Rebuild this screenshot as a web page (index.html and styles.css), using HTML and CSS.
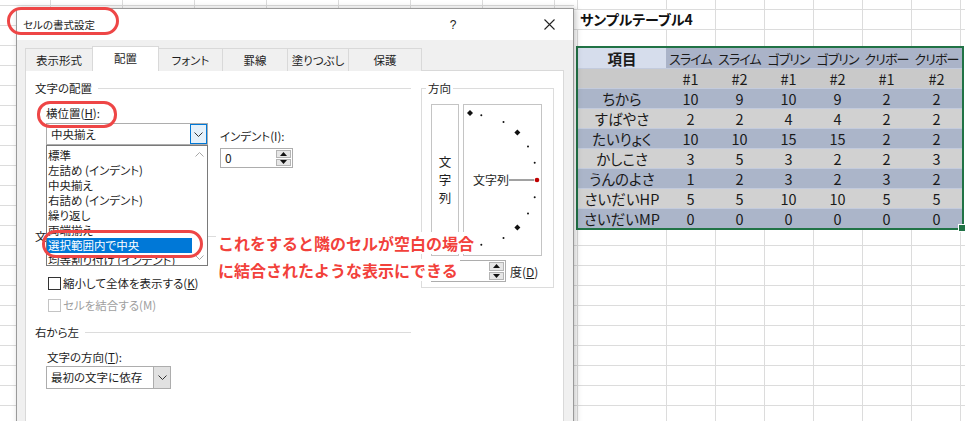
FILE: index.html
```html
<!DOCTYPE html>
<html lang="ja">
<head>
<meta charset="utf-8">
<title>セルの書式設定</title>
<link rel="stylesheet" href="styles.css">
</head>
<body>
<div class="app">
  <div class="gutter"></div>
  <div class="dialog-col">
    <div class="dialog">
      <div class="titlebar">
        <span class="title">セルの書式設定</span>
        <span class="help">?</span>
        <span class="close"><svg width="11" height="11" viewBox="0 0 11 11"><path d="M0.5 0.5L10.5 10.5M10.5 0.5L0.5 10.5" stroke="#222" stroke-width="1.1" fill="none"/></svg></span>
      </div>
      <div class="dbody">
        <div class="tabs">
          <div class="tab w1">表示形式</div>
          <div class="tab w2 sel">配置</div>
          <div class="tab w3">フォント</div>
          <div class="tab w4">罫線</div>
          <div class="tab w5">塗りつぶし</div>
          <div class="tab w6">保護</div>
        </div>
        <div class="panel">
          <div class="leftcol">
            <div class="ghead">文字の配置</div>
            <div class="row-top">
              <div class="col-h">
                <div class="lbl">横位置(<u>H</u>):</div>
                <div class="combo-wrap">
                  <div class="combo"><span class="val">中央揃え</span><span class="btn active"><svg width="9" height="5" viewBox="0 0 9 5"><path d="M0.5 0.5L4.5 4.5L8.5 0.5" stroke="#333" fill="none"/></svg></span></div>
                  <div class="listbox">
                    <div class="items">
                      <div class="item">標準</div>
                      <div class="item">左詰め (インデント)</div>
                      <div class="item">中央揃え</div>
                      <div class="item">右詰め (インデント)</div>
                      <div class="item">繰り返し</div>
                      <div class="item">両端揃え</div>
                      <div class="item selected">選択範囲内で中央</div>
                      <div class="item">均等割り付け (インデント)</div>
                    </div>
                    <div class="sb">
                      <svg width="9" height="5" viewBox="0 0 9 5"><path d="M0.5 4.5L4.5 0.5L8.5 4.5" stroke="#a8a8a8" fill="none"/></svg>
                      <svg width="9" height="5" viewBox="0 0 9 5"><path d="M0.5 0.5L4.5 4.5L8.5 0.5" stroke="#a8a8a8" fill="none"/></svg>
                    </div>
                  </div>
                </div>
                <div class="v-spacer"></div>
              </div>
              <div class="col-indent">
                <div class="lbl">インデント(I):</div>
                <div class="spin indent">
                  <span class="val">0</span>
                  <span class="arrows">
                    <span class="sbtn"><svg width="7" height="4" viewBox="0 0 7 4"><path d="M3.5 0L7 4H0Z" fill="#111"/></svg></span>
                    <span class="sbtn"><svg width="7" height="4" viewBox="0 0 7 4"><path d="M0 0H7L3.5 4Z" fill="#111"/></svg></span>
                  </span>
                </div>
              </div>
            </div>
            <div class="ghead g2">文字の制御</div>
            <div class="chk c1"><span class="box"></span><span class="peek">(<u>W</u>)</span></div>
            <div class="chk c2"><span class="box"></span>縮小して全体を表示する(<u>K</u>)</div>
            <div class="chk c3 disabled"><span class="box"></span>セルを結合する(M)</div>
            <div class="ghead g3">右から左</div>
            <div class="lbl dir-lbl">文字の方向(<u>T</u>):</div>
            <div class="combo dir-combo"><span class="val">最初の文字に依存</span><span class="btn"><svg width="9" height="5" viewBox="0 0 9 5"><path d="M0.5 0.5L4.5 4.5L8.5 0.5" stroke="#333" fill="none"/></svg></span></div>
          </div>
          <fieldset class="orient-group">
            <legend>方向</legend>
            <div class="orient">
              <div class="vbox"><span>文</span><span>字</span><span>列</span></div>
              <div class="dial">
                <svg class="dial-svg" width="77" height="150" viewBox="0 0 77 150">
                  <g fill="#111">
                    <path d="M6 5L9 8L6 11L3 8Z"/>
                    <path d="M53.4 24.6L56.4 27.6L53.4 30.6L50.4 27.6Z"/>
                    <path d="M53.4 119.4L56.4 122.4L53.4 125.4L50.4 122.4Z"/>
                    <path d="M6 139L9 142L6 145L3 142Z"/>
                    <circle cx="17.3" cy="10.3" r="1"/>
                    <circle cx="39.5" cy="17" r="1"/>
                    <circle cx="64" cy="41.5" r="1"/>
                    <circle cx="70.7" cy="57.7" r="1"/>
                    <circle cx="70.7" cy="92.3" r="1"/>
                    <circle cx="64" cy="108.5" r="1"/>
                    <circle cx="39.5" cy="133" r="1"/>
                    <circle cx="17.3" cy="139.7" r="1"/>
                  </g>
                  <line x1="45" y1="75" x2="70" y2="75" stroke="#444" stroke-width="1"/>
                  <circle cx="73" cy="75" r="2.3" fill="#c00000"/>
                </svg>
                <span class="dial-label">文字列</span>
              </div>
            </div>
            <div class="deg">
              <div class="spin degspin">
                <span class="val"></span>
                <span class="arrows">
                  <span class="sbtn"><svg width="7" height="4" viewBox="0 0 7 4"><path d="M3.5 0L7 4H0Z" fill="#111"/></svg></span>
                  <span class="sbtn"><svg width="7" height="4" viewBox="0 0 7 4"><path d="M0 0H7L3.5 4Z" fill="#111"/></svg></span>
                </span>
              </div>
              <span class="deg-lbl">度(<u>D</u>)</span>
            </div>
          </fieldset>
        </div>
      </div>
    </div>
  </div>
  <div class="sheet">
    <div class="sheet-top"><div class="sheet-title">サンプルテーブル4</div></div>
    <div class="tbl-wrap">
      <table class="tbl">
        <colgroup><col class="c-name"><col class="c-n"><col class="c-n"><col class="c-n"><col class="c-n"><col class="c-n"><col class="c-last"></colgroup>
        <tr class="hrow"><td class="h0">項目</td><td>スライム</td><td>スライム</td><td>ゴブリン</td><td>ゴブリン</td><td>クリボー</td><td>クリボー</td></tr>
        <tr class="srow"><td></td><td>#1</td><td>#2</td><td>#1</td><td>#2</td><td>#1</td><td>#2</td></tr>
        <tr class="b"><td>ちから</td><td>10</td><td>9</td><td>10</td><td>9</td><td>2</td><td>2</td></tr>
        <tr class="g"><td>すばやさ</td><td>2</td><td>2</td><td>4</td><td>4</td><td>2</td><td>2</td></tr>
        <tr class="b"><td>たいりょく</td><td>10</td><td>10</td><td>15</td><td>15</td><td>2</td><td>2</td></tr>
        <tr class="g"><td>かしこさ</td><td>3</td><td>5</td><td>3</td><td>2</td><td>2</td><td>3</td></tr>
        <tr class="b"><td>うんのよさ</td><td>1</td><td>2</td><td>3</td><td>2</td><td>3</td><td>2</td></tr>
        <tr class="g"><td>さいだいHP</td><td>5</td><td>5</td><td>10</td><td>10</td><td>5</td><td>5</td></tr>
        <tr class="b"><td>さいだいMP</td><td>0</td><td>0</td><td>0</td><td>0</td><td>0</td><td>0</td></tr>
      </table>
    </div>
    <div class="sheet-bottom"></div>
  </div>

  <div class="oval o1"></div>
  <div class="oval o2"></div>
  <div class="oval o3"></div>
  <div class="annot">
    <div class="annot-line">これをすると隣のセルが空白の場合</div>
    <div class="annot-line second">に結合されたような表示にできる</div>
  </div>
</div>
</body>
</html>
```

FILE: styles.css
```css
* { box-sizing: border-box; }
html, body { margin: 0; padding: 0; }
body {
  width: 965px;
  height: 421px;
  overflow: hidden;
  font-family: "Noto Sans CJK JP", "Noto Sans", sans-serif;
  color: #1e1e1e;
  background: #fff;
}
.app {
  --grid: #dcdcdc;
  --vlines: linear-gradient(to right,
    transparent 3px, var(--grid) 3px 4px,
    transparent 4px 92px, var(--grid) 92px 93px,
    transparent 93px 141px, var(--grid) 141px 142px,
    transparent 142px 190px, var(--grid) 190px 191px,
    transparent 191px 239px, var(--grid) 239px 240px,
    transparent 240px 288px, var(--grid) 288px 289px,
    transparent 289px 337px, var(--grid) 337px 338px,
    transparent 338px 386px, var(--grid) 386px 387px,
    transparent 387px);
  position: relative;
  display: flex;
  width: 965px;
  height: 421px;
  overflow: hidden;
  background-color: #fff;
  background-image:
    linear-gradient(to right, var(--grid) 1px, transparent 1px),
    linear-gradient(to bottom, var(--grid) 1px, transparent 1px);
  background-size: 72px 100%, 100% 20px;
  background-position: 50px 0, 0 5px;
}
.gutter { width: 16px; flex: none; }

/* ---------- dialog ---------- */
.dialog-col {
  width: 558px;
  flex: none;
  padding-top: 8px;
  position: relative;
  z-index: 1;
}
.dialog {
  height: 430px;
  border: 1px solid #9a9a9a;
  border-bottom: none;
  background: #f0f0f0;
  box-shadow: 2px 0 6px rgba(0, 0, 0, 0.22);
  font-feature-settings: "palt";
}
.titlebar {
  height: 31px;
  background: #fff;
  display: flex;
  align-items: center;
  padding-left: 6px;
}
.title { flex: 1; font-size: 10.5px; color: #222; }
.help {
  width: 46px;
  text-align: center;
  margin-right: 50px;
  font-size: 12px;
  font-family: "Liberation Sans", sans-serif;
  color: #222;
}
.close {
  width: 46px;
  margin-right: 1px;
  display: flex;
  align-items: center;
  justify-content: center;
}
.dbody { padding: 6px 9px 0 8px; }
.tabs {
  display: flex;
  align-items: flex-end;
  height: 25px;
  padding-left: 1px;
}
.tab {
  height: 23px;
  margin-left: -1px;
  border: 1px solid #d9d9d9;
  border-bottom: none;
  background: #f0f0f0;
  font-size: 11.5px;
  display: flex;
  align-items: center;
  justify-content: center;
  padding-bottom: 1px;
}
.tab.sel {
  height: 25px;
  background: #fff;
  position: relative;
  z-index: 1;
  padding-bottom: 2px;
}
.w1 { width: 68px; }
.w2 { width: 67px; }
.w3 { width: 65px; }
.w4 { width: 66px; }
.w5 { width: 62px; }
.w6 { width: 74px; }

.panel {
  margin-top: -1px;
  height: 380px;
  background: #fff;
  border: 1px solid #d9d9d9;
  display: grid;
  grid-template-columns: 385px 133px;
  column-gap: 10px;
  align-items: start;
  font-size: 11.5px;
}
.ghead {
  display: flex;
  align-items: center;
  height: 16px;
  line-height: 16px;
  margin-top: 9px;
  padding-left: 9px;
  white-space: nowrap;
}
.ghead::after {
  content: "";
  flex: 1;
  height: 1px;
  background: #dcdcdc;
  margin-left: 6px;
}
.lbl { height: 16px; line-height: 16px; white-space: nowrap; }
.row-top { display: flex; margin-top: 9px; }
.col-h { margin-left: 20px; width: 162px; }
.combo-wrap { position: relative; margin-top: 2px; }
.combo {
  display: flex;
  height: 22px;
  border: 1px solid #adadad;
  background: #fff;
}
.combo .val {
  flex: 1;
  padding-left: 4px;
  line-height: 20px;
  white-space: nowrap;
}
.combo .btn {
  width: 17px;
  display: flex;
  align-items: center;
  justify-content: center;
  border-left: 1px solid #adadad;
  background: #e1e1e1;
}
.combo .btn.active {
  background: #e5f1fb;
  box-shadow: inset 0 0 0 1px #0078d7;
  border-left: none;
}
.listbox {
  position: absolute;
  top: 100%;
  left: 0;
  width: 162px;
  height: 121px;
  border: 1px solid #7a7a7a;
  background: #fff;
  display: flex;
  overflow: hidden;
  z-index: 2;
}
.items { flex: 1; padding-top: 2px; overflow: hidden; }
.item {
  height: 15px;
  line-height: 15px;
  padding-left: 1px;
  white-space: nowrap;
}
.item.selected { background: #0078d7; color: #fff; }
.sb {
  width: 15px;
  display: flex;
  flex-direction: column;
  justify-content: space-between;
  align-items: center;
  padding: 6px 0 5px;
}
.v-spacer { height: 47px; }
.col-indent { margin-left: 12px; padding-top: 23px; }
.spin {
  display: flex;
  height: 20px;
  border: 1px solid #adadad;
  background: #fff;
}
.spin .val { flex: 1; padding-left: 4px; line-height: 18px; font-size: 12px; }
.spin .arrows {
  width: 16px;
  display: flex;
  flex-direction: column;
  padding: 1px 1px 1px 0;
  gap: 1px;
}
.sbtn {
  flex: 1;
  background: #e6e6e6;
  border: 1px solid #b4b4b4;
  display: flex;
  align-items: center;
  justify-content: center;
}
.indent { width: 73px; margin-top: 4px; }
.g2 { margin-top: 36px; }
.chk {
  display: flex;
  align-items: center;
  height: 16px;
  padding-left: 22px;
  white-space: nowrap;
}
.chk .box {
  width: 13px;
  height: 13px;
  border: 1px solid #333;
  background: #fff;
  margin-right: 2px;
  flex: none;
}
.peek { margin-left: 127px; }
.c1 { margin-top: 7px; }
.c2 { margin-top: 8px; }
.c3 { margin-top: 6px; }
.chk.disabled { color: #a0a0a0; }
.chk.disabled .box { border-color: #c4c4c4; }
.g3 { margin-top: 11px; }
.dir-lbl { margin-top: 9px; padding-left: 21px; }
.dir-combo { margin: 1px 0 0 20px; width: 125px; height: 23px; }
.dir-combo .val { line-height: 21px; }

/* orientation group */
.orient-group {
  margin: 9px 0 0;
  padding: 8px 9px 5px;
  border: 1px solid #dcdcdc;
  min-width: 0;
}
.orient-group legend {
  padding: 0 2px;
  margin-left: -5px;
  height: 16px;
  line-height: 16px;
}
.orient { display: flex; gap: 4px; }
.vbox {
  width: 28px;
  height: 152px;
  border: 1px solid #c4c4c4;
  display: flex;
  flex-direction: column;
  align-items: center;
  justify-content: center;
  font-size: 12.5px;
  line-height: 18px;
}
.dial {
  width: 79px;
  height: 152px;
  border: 1px solid #c4c4c4;
  position: relative;
}
.dial-svg { position: absolute; left: 0; top: 0; }
.dial-label {
  position: absolute;
  left: 9px;
  top: 67px;
  font-size: 12px;
  line-height: 16px;
  white-space: nowrap;
}
.deg { display: flex; align-items: center; margin-top: 4px; height: 22px; }
.degspin { width: 75px; height: 22px; }
.deg-lbl { margin-left: 4px; font-size: 12px; white-space: nowrap; }

/* ---------- sheet ---------- */
.sheet {
  flex: 1;
  display: flex;
  flex-direction: column;
  background: #fff;
}
.sheet-top {
  height: 48px;
  flex: none;
  background-image: var(--vlines), linear-gradient(to bottom, var(--grid) 1px, transparent 1px);
  background-size: 100% 100%, 100% 20px;
  background-position: 0 0, 0 9px;
  background-repeat: no-repeat, repeat-y;
}
.sheet-title {
  margin-top: 10px;
  height: 19px;
  width: 140px;
  background: #fff;
  padding-left: 6px;
  line-height: 19px;
  font-size: 14px;
  font-weight: bold;
  font-feature-settings: "palt";
  white-space: nowrap;
  color: #111;
}
.tbl-wrap {
  position: relative;
  width: 384px;
  margin-left: 4px;
  box-shadow: 0 0 0 2px #217346;
  flex: none;
}
.tbl-wrap::after {
  content: "";
  position: absolute;
  right: -4px;
  bottom: -4px;
  width: 6px;
  height: 6px;
  background: #217346;
  border: 1px solid #fff;
}
.tbl {
  border-collapse: collapse;
  table-layout: fixed;
  width: 384px;
  font-size: 14.5px;
  font-feature-settings: "palt";
  color: #1a1a1a;
}
.c-name { width: 88px; }
.c-n { width: 49px; }
.c-last { width: 51px; }
.tbl td {
  height: 20px;
  padding: 0;
  text-align: center;
  line-height: 19px;
  white-space: nowrap;
  overflow: hidden;
  box-shadow: inset 0 1px 0 #c3cbdd;
}
.hrow td {
  background: #aab3c8;
  font-size: 13px;
  letter-spacing: -0.9px;
  box-shadow: none;
}
.hrow td.h0 { background: #d6ddec; font-weight: bold; letter-spacing: 0; font-size: 14.5px; }
.srow td { background: #c9c9c9; }
.b td { background: #abb5c9; }
.g td { background: #d1d1d1; }
.sheet-bottom {
  flex: 1;
  background-image: var(--vlines), linear-gradient(to bottom, var(--grid) 1px, transparent 1px);
  background-size: 100% 100%, 100% 20px;
  background-position: 0 0, 0 17px;
  background-repeat: no-repeat, repeat-y;
}

/* ---------- annotations ---------- */
.oval {
  position: absolute;
  border: 3px solid #ee4646;
  border-radius: 14px;
  z-index: 5;
}
.o1 { left: 7px; top: 7px; width: 112px; height: 28px; }
.o2 { left: 37px; top: 101px; width: 80px; height: 27px; border-radius: 13px; }
.o3 { left: 42px; top: 230px; width: 161px; height: 28px; }
.annot {
  position: absolute;
  left: 216px;
  top: 232px;
  z-index: 4;
}
.annot-line {
  width: fit-content;
  height: 22px;
  line-height: 22px;
  padding: 0 2px;
  background: #fff;
  color: #f2413b;
  font-size: 16px;
  font-weight: bold;
  white-space: nowrap;
}
.annot-line.second { margin-top: 5px; }
```
